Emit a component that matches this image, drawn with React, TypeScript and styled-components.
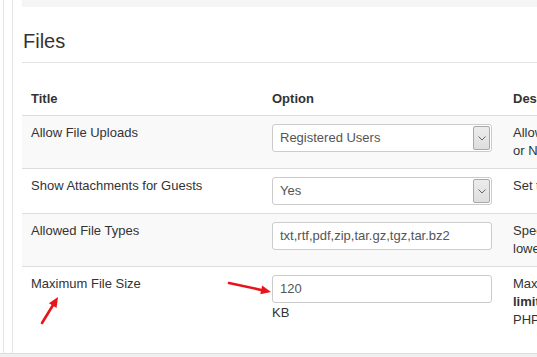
import React from 'react'
import styled, { createGlobalStyle } from 'styled-components'

const GlobalStyle = createGlobalStyle`
  html, body {
    margin: 0;
    padding: 0;
    background: #fff;
  }
  body {
    font-family: "Liberation Sans", Arial, sans-serif;
    font-size: 13px;
    line-height: 18px;
    color: #333;
  }
`

const Shell = styled.div`
  position: relative;
  width: 537px;
  height: 357px;
  overflow: hidden;
  display: flex;
  flex-direction: column;
`

const Frame = styled.div`
  flex: 1;
  margin-left: 3px;
  border-left: 1px solid #e6e6e6;
  padding-left: 8px;
  display: flex;
  min-height: 0;
`

const Panel = styled.div`
  flex: 1;
  border-left: 1px solid #e6e6e6;
  padding-left: 9px;
  min-width: 0;
`

const Footer = styled.div`
  height: 3px;
  background: #f0f0f0;
  border-top: 1px solid #dcdcdc;
`

const Well = styled.div`
  height: 7px;
  background: #f5f5f5;
`

const Heading = styled.h2`
  margin: 21px 0 0;
  padding: 0 0 8px 1px;
  font-size: 20px;
  line-height: 26px;
  font-weight: normal;
  color: #333;
  border-bottom: 1px solid #e2e2e2;
`

const Table = styled.table`
  margin-top: 18px;
  width: 760px;
  border-collapse: collapse;
  table-layout: fixed;
`

const Th = styled.th`
  text-align: left;
  font-weight: bold;
  padding: 9px 9px 7px;
  line-height: 18px;
  border-bottom: 1px solid #ddd;
`

const Row = styled.tr<{ $striped?: boolean }>`
  background: ${({ $striped }) => ($striped ? '#f9f9f9' : '#fff')};
`

const Td = styled.td<{ $extra?: number }>`
  vertical-align: top;
  padding: 8px 9px ${({ $extra }) => 8 + ($extra || 0)}px;
  border-top: 1px solid #ddd;
  white-space: nowrap;
`

const Field = styled.div`
  box-sizing: border-box;
  width: 220px;
  height: 28px;
  border: 1px solid #ccc;
  border-radius: 3px;
  background: #fff;
  display: flex;
  align-items: center;
  padding-left: 7px;
  color: #555;
  font-size: 13px;
`

const SelectBox = styled(Field)`
  padding-right: 1px;
`

const SelectText = styled.span`
  flex: 1;
`

const ArrowBox = styled.span`
  box-sizing: border-box;
  width: 17px;
  height: 24px;
  border: 1px solid #a9a9a9;
  border-radius: 2px;
  background: linear-gradient(#ececec, #dedede);
  display: flex;
  align-items: center;
  justify-content: center;
`

const Unit = styled.div`
  margin-top: 1px;
  line-height: 18px;
`

const Overlay = styled.svg`
  position: absolute;
  left: 0;
  top: 0;
  pointer-events: none;
`

const Select = ({ value }: { value: string }) => (
  <SelectBox>
    <SelectText>{value}</SelectText>
    <ArrowBox>
      <svg width="8" height="5" viewBox="0 0 8 5">
        <polyline points="0.5,0.5 4,4 7.5,0.5" fill="none" stroke="#666" strokeWidth="1" />
      </svg>
    </ArrowBox>
  </SelectBox>
)

const Arrow = ({ x1, y1, x2, y2 }: { x1: number; y1: number; x2: number; y2: number }) => {
  const a = Math.atan2(y2 - y1, x2 - x1)
  const len = 10
  const w = 4.5
  const bx = x2 - len * Math.cos(a)
  const by = y2 - len * Math.sin(a)
  const px = -Math.sin(a) * w
  const py = Math.cos(a) * w
  return (
    <g>
      <line x1={x1} y1={y1} x2={bx} y2={by} stroke="#e8141b" strokeWidth="2.6" strokeLinecap="round" />
      <polygon points={`${x2},${y2} ${bx + px},${by + py} ${bx - px},${by - py}`} fill="#e8141b" />
    </g>
  )
}

const App = () => (
  <>
    <GlobalStyle />
    <Shell>
      <Frame>
        <Panel>
          <Well />
          <Heading>Files</Heading>
          <Table>
            <colgroup>
              <col style={{ width: 241 }} />
              <col style={{ width: 241 }} />
              <col />
            </colgroup>
            <thead>
              <tr>
                <Th>Title</Th>
                <Th>Option</Th>
                <Th>Description</Th>
              </tr>
            </thead>
            <tbody>
              <Row $striped>
                <Td>Allow File Uploads</Td>
                <Td><Select value="Registered Users" /></Td>
                <Td>Allow file uploads for Registered Users, Moderators<br />or Nobody.</Td>
              </Row>
              <Row>
                <Td>Show Attachments for Guests</Td>
                <Td><Select value="Yes" /></Td>
                <Td>Set to Yes to show attachments to guests.</Td>
              </Row>
              <Row $striped>
                <Td>Allowed File Types</Td>
                <Td><Field>txt,rtf,pdf,zip,tar.gz,tgz,tar.bz2</Field></Td>
                <Td>Specify allowed file types here, separated by commas,<br />lowercase and without spaces.</Td>
              </Row>
              <Row>
                <Td>Maximum File Size</Td>
                <Td>
                  <Field>120</Field>
                  <Unit>KB</Unit>
                </Td>
                <Td $extra={13}>
                  Maximum file size in kilobytes. Your server<br />
                  <b>limit</b> is set by upload_max_filesize in<br />
                  PHP configuration.
                </Td>
              </Row>
            </tbody>
          </Table>
        </Panel>
      </Frame>
      <Footer />
      <Overlay width="537" height="357">
        <Arrow x1={42} y1={323} x2={58} y2={297} />
        <Arrow x1={229} y1={283} x2={271} y2={292} />
      </Overlay>
    </Shell>
  </>
)

export default App
